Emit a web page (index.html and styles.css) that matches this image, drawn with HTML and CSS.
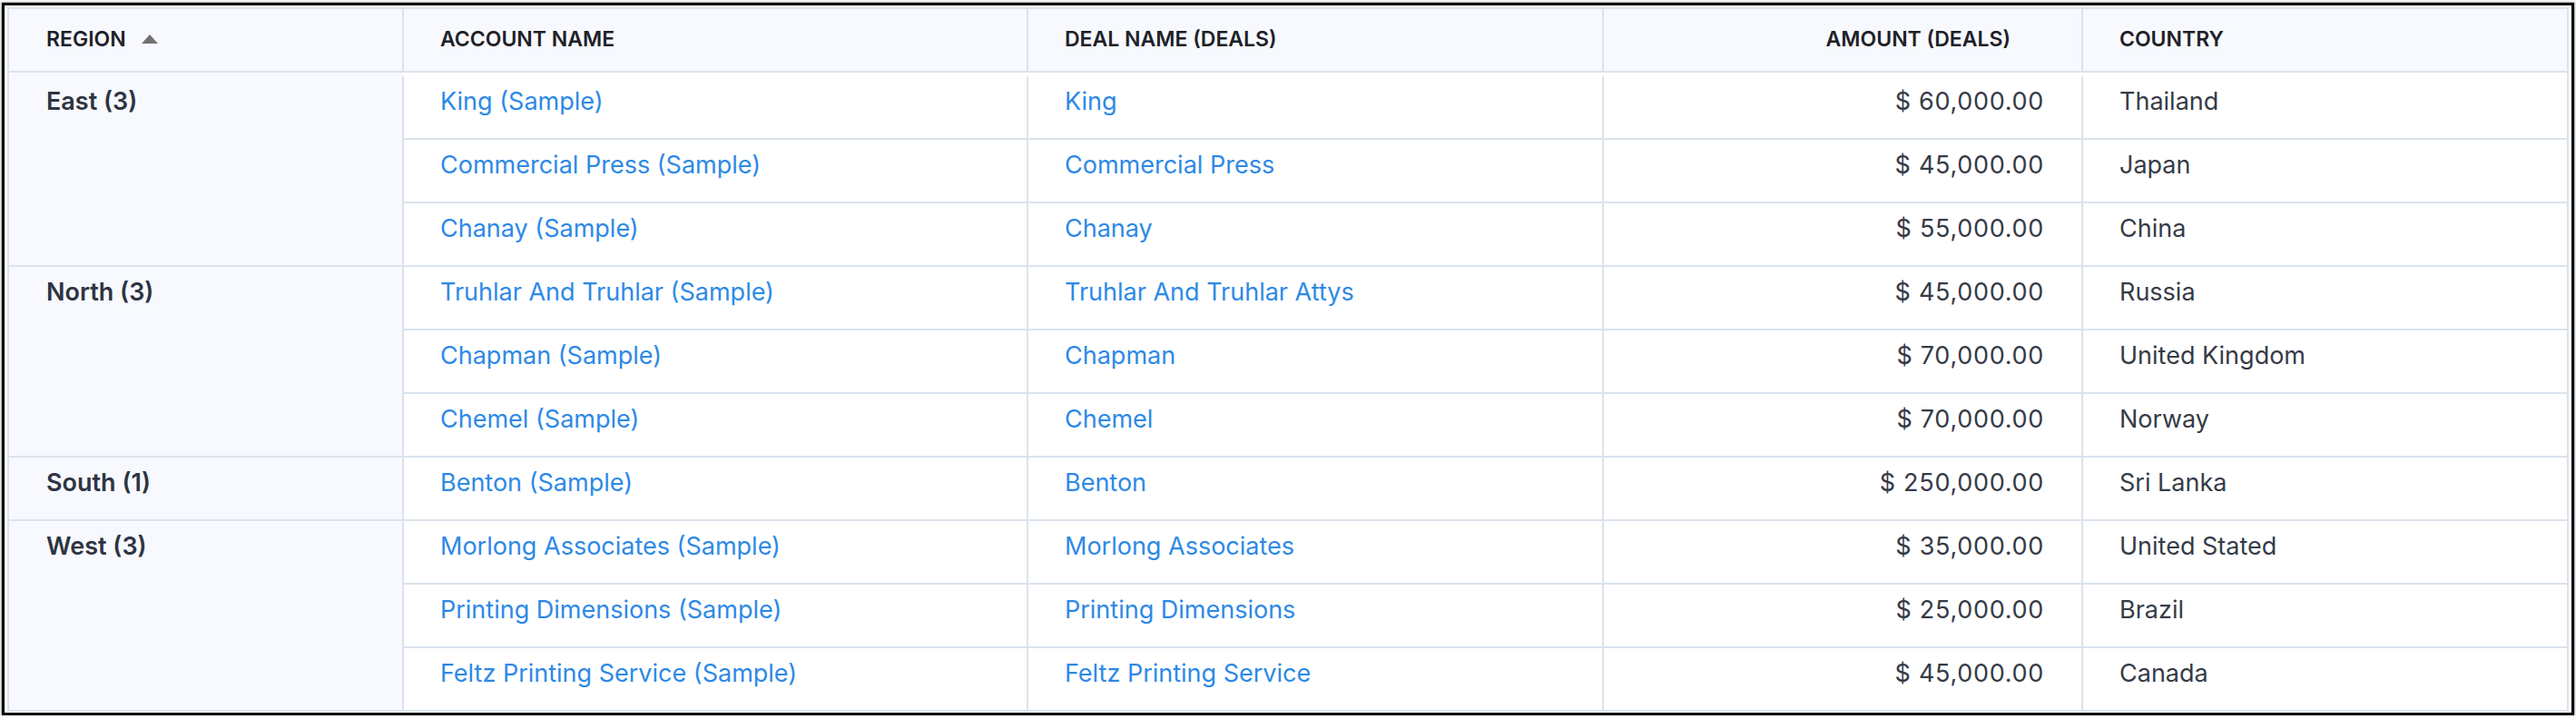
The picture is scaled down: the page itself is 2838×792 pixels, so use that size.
FILE: index.html
```html
<!DOCTYPE html>
<html lang="en">
<head>
<meta charset="utf-8">
<title>Deals by Region</title>
<link rel="stylesheet" href="styles.css">
</head>
<body>
<div class="frame">
  <div class="report" role="table">
    <div class="hcell first" role="columnheader">REGION <span class="sort-up"></span></div>
    <div class="hcell" role="columnheader">ACCOUNT NAME</div>
    <div class="hcell" role="columnheader">DEAL NAME (DEALS)</div>
    <div class="hcell hnum" role="columnheader">AMOUNT (DEALS)</div>
    <div class="hcell" role="columnheader">COUNTRY</div>

    <div class="spacer-region"></div>
    <div class="spacer-rest"></div>

    <div class="region span3" role="rowheader">East (3)</div>
    <div class="cell"><a class="link" href="#">King (Sample)</a></div>
    <div class="cell"><a class="link" href="#">King</a></div>
    <div class="cell num">$ 60,000.00</div>
    <div class="cell">Thailand</div>

    <div class="cell"><a class="link" href="#">Commercial Press (Sample)</a></div>
    <div class="cell"><a class="link" href="#">Commercial Press</a></div>
    <div class="cell num">$ 45,000.00</div>
    <div class="cell">Japan</div>

    <div class="cell"><a class="link" href="#">Chanay (Sample)</a></div>
    <div class="cell"><a class="link" href="#">Chanay</a></div>
    <div class="cell num">$ 55,000.00</div>
    <div class="cell">China</div>

    <div class="region span3" role="rowheader">North (3)</div>
    <div class="cell"><a class="link" href="#">Truhlar And Truhlar (Sample)</a></div>
    <div class="cell"><a class="link" href="#">Truhlar And Truhlar Attys</a></div>
    <div class="cell num">$ 45,000.00</div>
    <div class="cell">Russia</div>

    <div class="cell"><a class="link" href="#">Chapman (Sample)</a></div>
    <div class="cell"><a class="link" href="#">Chapman</a></div>
    <div class="cell num">$ 70,000.00</div>
    <div class="cell">United Kingdom</div>

    <div class="cell"><a class="link" href="#">Chemel (Sample)</a></div>
    <div class="cell"><a class="link" href="#">Chemel</a></div>
    <div class="cell num">$ 70,000.00</div>
    <div class="cell">Norway</div>

    <div class="region" role="rowheader">South (1)</div>
    <div class="cell"><a class="link" href="#">Benton (Sample)</a></div>
    <div class="cell"><a class="link" href="#">Benton</a></div>
    <div class="cell num">$ 250,000.00</div>
    <div class="cell">Sri Lanka</div>

    <div class="region span3" role="rowheader">West (3)</div>
    <div class="cell"><a class="link" href="#">Morlong Associates (Sample)</a></div>
    <div class="cell"><a class="link" href="#">Morlong Associates</a></div>
    <div class="cell num">$ 35,000.00</div>
    <div class="cell">United Stated</div>

    <div class="cell"><a class="link" href="#">Printing Dimensions (Sample)</a></div>
    <div class="cell"><a class="link" href="#">Printing Dimensions</a></div>
    <div class="cell num">$ 25,000.00</div>
    <div class="cell">Brazil</div>

    <div class="cell"><a class="link" href="#">Feltz Printing Service (Sample)</a></div>
    <div class="cell"><a class="link" href="#">Feltz Printing Service</a></div>
    <div class="cell num">$ 45,000.00</div>
    <div class="cell">Canada</div>
  </div>
</div>
</body>
</html>
```

FILE: styles.css
```css
* { box-sizing: border-box; }

html, body {
  margin: 0;
  padding: 0;
  background: #ffffff;
}

body {
  font-family: "Inter", "Liberation Sans", sans-serif;
  color: #353b47;
}

.frame {
  margin: 3px 0 0 2px;
  width: 2834px;
  border: 3px solid #000000;
  box-shadow: 0 0 2px 1px rgba(0, 0, 0, 0.35);
  padding: 2px 3px 1px 3px;
  background: #ffffff;
}

.report {
  width: 2822px;
  display: grid;
  grid-template-columns: 433px 688px 634px 528px 1fr;
  grid-template-rows: 70px 4px repeat(10, 70px);
  border: 2px solid #dbe3ed;
  border-bottom: 0;
}

.hcell {
  background: #f7f9fe;
  border-left: 2px solid #dbe3ed;
  border-bottom: 2px solid #dbe3ed;
  padding: 19px 40px 0 40px;
  font-size: 23px;
  line-height: 28px;
  font-weight: 600;
  color: #1e2128;
  white-space: nowrap;
}

.hcell.first {
  border-left: 0;
  padding-left: 41px;
}

.hcell.hnum {
  text-align: right;
  padding-right: 78px;
}

.sort-up {
  display: inline-block;
  width: 0;
  height: 0;
  margin-left: 12px;
  vertical-align: 3px;
  border-left: 9px solid transparent;
  border-right: 9px solid transparent;
  border-bottom: 10px solid #727272;
}

.spacer-region {
  background: #f7f9fe;
}

.spacer-rest {
  grid-column: 2 / 6;
  background: #ffffff;
}

.cell {
  border-left: 2px solid #dbe3ed;
  border-bottom: 2px solid #dbe3ed;
  padding: 11px 40px 0 40px;
  font-size: 27px;
  line-height: 33px;
  color: #353b47;
  white-space: nowrap;
}

.num {
  text-align: right;
  padding-right: 41px;
  letter-spacing: 0.7px;
}

.region {
  grid-column: 1;
  background: #f7f9fe;
  border-bottom: 2px solid #dbe3ed;
  padding: 11px 40px 0 41px;
  font-size: 27px;
  line-height: 33px;
  font-weight: 600;
  color: #2e3442;
  white-space: nowrap;
}

.region.span3 {
  grid-row: span 3;
}

.link {
  color: #2d89e6;
  text-decoration: none;
}
```
